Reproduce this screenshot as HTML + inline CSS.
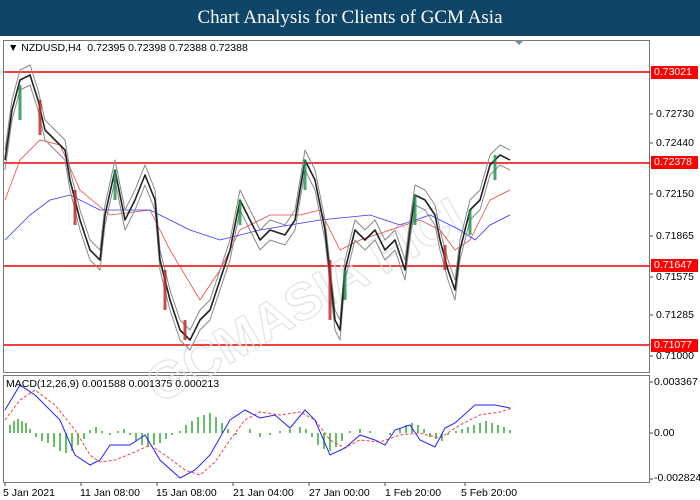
<!DOCTYPE html>
<html><head><style>
body{margin:0;width:700px;height:500px;background:#fff;font-family:"Liberation Sans",sans-serif;overflow:hidden;position:relative}
.hdr{position:absolute;left:0;top:0;width:700px;height:36px;background:#0f4566;color:#fff;font-family:"Liberation Serif",serif;font-size:19px;text-align:center;line-height:36px}
.lbl{position:absolute;font-size:10.5px;color:#000}
.tag{position:absolute;left:651px;width:44px;height:13px;background:#f00;color:#fff;font-size:10.5px;line-height:13px;padding-left:3px}
</style></head><body>
<div class="hdr">Chart Analysis for Clients of GCM Asia</div>
<svg width="700" height="500" style="position:absolute;left:0;top:0">
<rect x="3.5" y="40.5" width="646" height="332" fill="none" stroke="#777"/>
<rect x="3.5" y="375.5" width="646" height="107" fill="none" stroke="#777"/>
<path d="M514 40 l5 5 l5 -5z" fill="#7a8a9a"/>
<g stroke="#e00" stroke-width="1.5">
<line x1="4" y1="72" x2="650" y2="72"/><line x1="4" y1="163" x2="650" y2="163"/>
<line x1="4" y1="266" x2="650" y2="266"/><line x1="4" y1="345" x2="650" y2="345"/></g>
<text x="110" y="300" transform="rotate(-30 330 260)" font-size="52" font-weight="bold" fill="none" stroke="#e2e2e2" stroke-width="1.2">GCMASIA FICI</text>
<polyline fill="none" stroke="#e44" stroke-width="0.8" points="5,200 20,160 40,140 60,145 80,190 110,215 150,210 170,250 200,300 220,270 240,230 270,215 300,215 320,210 340,250 360,240 390,230 420,220 440,230 455,250 470,240 490,200 510,190"/>
<polyline fill="none" stroke="#33f" stroke-width="0.8" points="5,240 30,215 50,200 70,195 100,210 150,210 190,230 220,240 260,230 320,220 370,215 400,225 430,215 460,230 475,240 490,225 510,215"/>
<g fill="none" stroke-linejoin="round">
<polyline stroke="#888" stroke-width="1" transform="translate(0,-10)" points="5,160 12,110 20,80 30,75 38,100 45,130 55,140 65,150 70,180 80,220 90,250 100,260 105,215 115,170 125,220 135,200 145,175 155,200 160,260 170,300 180,330 190,340 200,320 210,310 220,280 230,250 240,200 250,220 260,240 270,230 285,235 295,220 305,160 315,180 325,230 335,320 340,330 345,270 355,230 365,240 375,230 385,250 395,240 405,270 410,230 415,195 425,200 435,215 440,240 448,270 455,290 460,250 470,210 480,200 490,165 500,155 510,160"/>
<polyline stroke="#888" stroke-width="1" transform="translate(0,10)" points="5,160 12,110 20,80 30,75 38,100 45,130 55,140 65,150 70,180 80,220 90,250 100,260 105,215 115,170 125,220 135,200 145,175 155,200 160,260 170,300 180,330 190,340 200,320 210,310 220,280 230,250 240,200 250,220 260,240 270,230 285,235 295,220 305,160 315,180 325,230 335,320 340,330 345,270 355,230 365,240 375,230 385,250 395,240 405,270 410,230 415,195 425,200 435,215 440,240 448,270 455,290 460,250 470,210 480,200 490,165 500,155 510,160"/>
<polyline stroke="#222" stroke-width="1.6" points="5,160 12,110 20,80 30,75 38,100 45,130 55,140 65,150 70,180 80,220 90,250 100,260 105,215 115,170 125,220 135,200 145,175 155,200 160,260 170,300 180,330 190,340 200,320 210,310 220,280 230,250 240,200 250,220 260,240 270,230 285,235 295,220 305,160 315,180 325,230 335,320 340,330 345,270 355,230 365,240 375,230 385,250 395,240 405,270 410,230 415,195 425,200 435,215 440,240 448,270 455,290 460,250 470,210 480,200 490,165 500,155 510,160"/></g>
<g stroke="#1a8f4a" stroke-width="3" opacity=".8"><line x1="20" y1="85" x2="20" y2="120"/><line x1="115" y1="170" x2="115" y2="200"/><line x1="240" y1="200" x2="240" y2="225"/><line x1="305" y1="160" x2="305" y2="190"/><line x1="345" y1="270" x2="345" y2="300"/><line x1="415" y1="195" x2="415" y2="225"/><line x1="470" y1="210" x2="470" y2="235"/><line x1="495" y1="155" x2="495" y2="180"/></g>
<g stroke="#b22" stroke-width="3" opacity=".8"><line x1="40" y1="100" x2="40" y2="135"/><line x1="75" y1="190" x2="75" y2="225"/><line x1="165" y1="270" x2="165" y2="310"/><line x1="185" y1="320" x2="185" y2="340"/><line x1="330" y1="260" x2="330" y2="320"/><line x1="445" y1="245" x2="445" y2="270"/></g>
<g stroke="#3a3" stroke-width="1.5">
<path d="M10 433v-8M14 433v-12M18 433v-14M22 433v-12M26 433v-10M30 433v-4M36 433v4M42 433v8M48 433v10M54 433v14M60 433v18M66 433v20M72 433v18M78 433v12M84 433v6M90 433v-3M96 433v-6M102 433v-2M110 433v2M118 433v-2M124 433v-4M130 433v2M136 433v8M142 433v12M148 433v14M154 433v12M160 433v10M166 433v6M172 433v2M180 433v-2M186 433v-8M192 433v-12M198 433v-16M204 433v-18M210 433v-20M216 433v-16M222 433v-10M228 433v-4M236 433v2M250 433v-4M260 433v4M270 433v2M280 433v-2M290 433v-4M300 433v-6M306 433v-4M312 433v4M318 433v12M324 433v16M330 433v18M336 433v14M342 433v8M350 433v-2M360 433v-4M370 433v-2M390 433v2M400 433v-4M406 433v-8M412 433v-10M418 433v-8M424 433v-4M430 433v4M436 433v6M442 433v8M448 433v2M456 433v-2M462 433v-4M468 433v-6M474 433v-8M480 433v-10M486 433v-12M492 433v-10M498 433v-8M504 433v-6M510 433v-3"/></g>
<polyline fill="none" stroke="#e44" stroke-width="1" stroke-dasharray="3,2" points="5,420 20,400 35,390 55,405 75,430 90,455 100,462 115,460 135,452 150,445 165,455 185,470 200,475 215,462 230,440 245,420 260,412 280,415 300,412 315,420 330,440 345,448 360,440 380,442 400,435 420,433 440,438 460,425 480,415 500,412 512,408"/>
<polyline fill="none" stroke="#22f" stroke-width="1" points="5,410 20,385 35,395 60,420 75,455 90,465 100,460 110,445 130,445 145,435 160,460 180,478 195,470 210,455 230,420 245,410 260,418 275,415 290,428 305,410 315,420 330,455 345,448 360,435 375,440 385,445 395,430 410,425 420,440 435,447 445,428 455,423 475,405 495,405 510,408"/>
<g stroke="#444"><path d="M650 114h3M650 143h3M650 194h3M650 236h3M650 277h3M650 315h3M650 356h3M650 382h3M650 433h3M650 479h3M5 483v3M81 483v3M157 483v3M233 483v3M309 483v3M385 483v3M465 483v3"/></g>
</svg>
<div class="lbl" style="left:8px;top:42px">&#9660; NZDUSD,H4&nbsp; 0.72395 0.72398 0.72388 0.72388</div>
<div class="lbl" style="left:656px;top:108px">0.72730</div>
<div class="lbl" style="left:656px;top:137px">0.72440</div>
<div class="lbl" style="left:656px;top:188px">0.72150</div>
<div class="lbl" style="left:656px;top:230px">0.71865</div>
<div class="lbl" style="left:656px;top:271px">0.71575</div>
<div class="lbl" style="left:656px;top:309px">0.71285</div>
<div class="lbl" style="left:656px;top:350px">0.71000</div>
<div class="tag" style="top:66px">0.73021</div>
<div class="tag" style="top:156px">0.72378</div>
<div class="tag" style="top:259px">0.71647</div>
<div class="tag" style="top:339px">0.71077</div>
<div class="lbl" style="left:6px;top:378px">MACD(12,26,9) 0.001588 0.001375 0.000213</div>
<div class="lbl" style="left:654px;top:376px">0.003367</div>
<div class="lbl" style="left:654px;top:427px">0.00</div>
<div class="lbl" style="left:654px;top:472px">-0.002824</div>
<div class="lbl" style="left:3px;top:487px">5 Jan 2021</div>
<div class="lbl" style="left:80px;top:487px">11 Jan 08:00</div>
<div class="lbl" style="left:156px;top:487px">15 Jan 08:00</div>
<div class="lbl" style="left:233px;top:487px">21 Jan 04:00</div>
<div class="lbl" style="left:309px;top:487px">27 Jan 00:00</div>
<div class="lbl" style="left:385px;top:487px">1 Feb 20:00</div>
<div class="lbl" style="left:461px;top:487px">5 Feb 20:00</div>
</body></html>
